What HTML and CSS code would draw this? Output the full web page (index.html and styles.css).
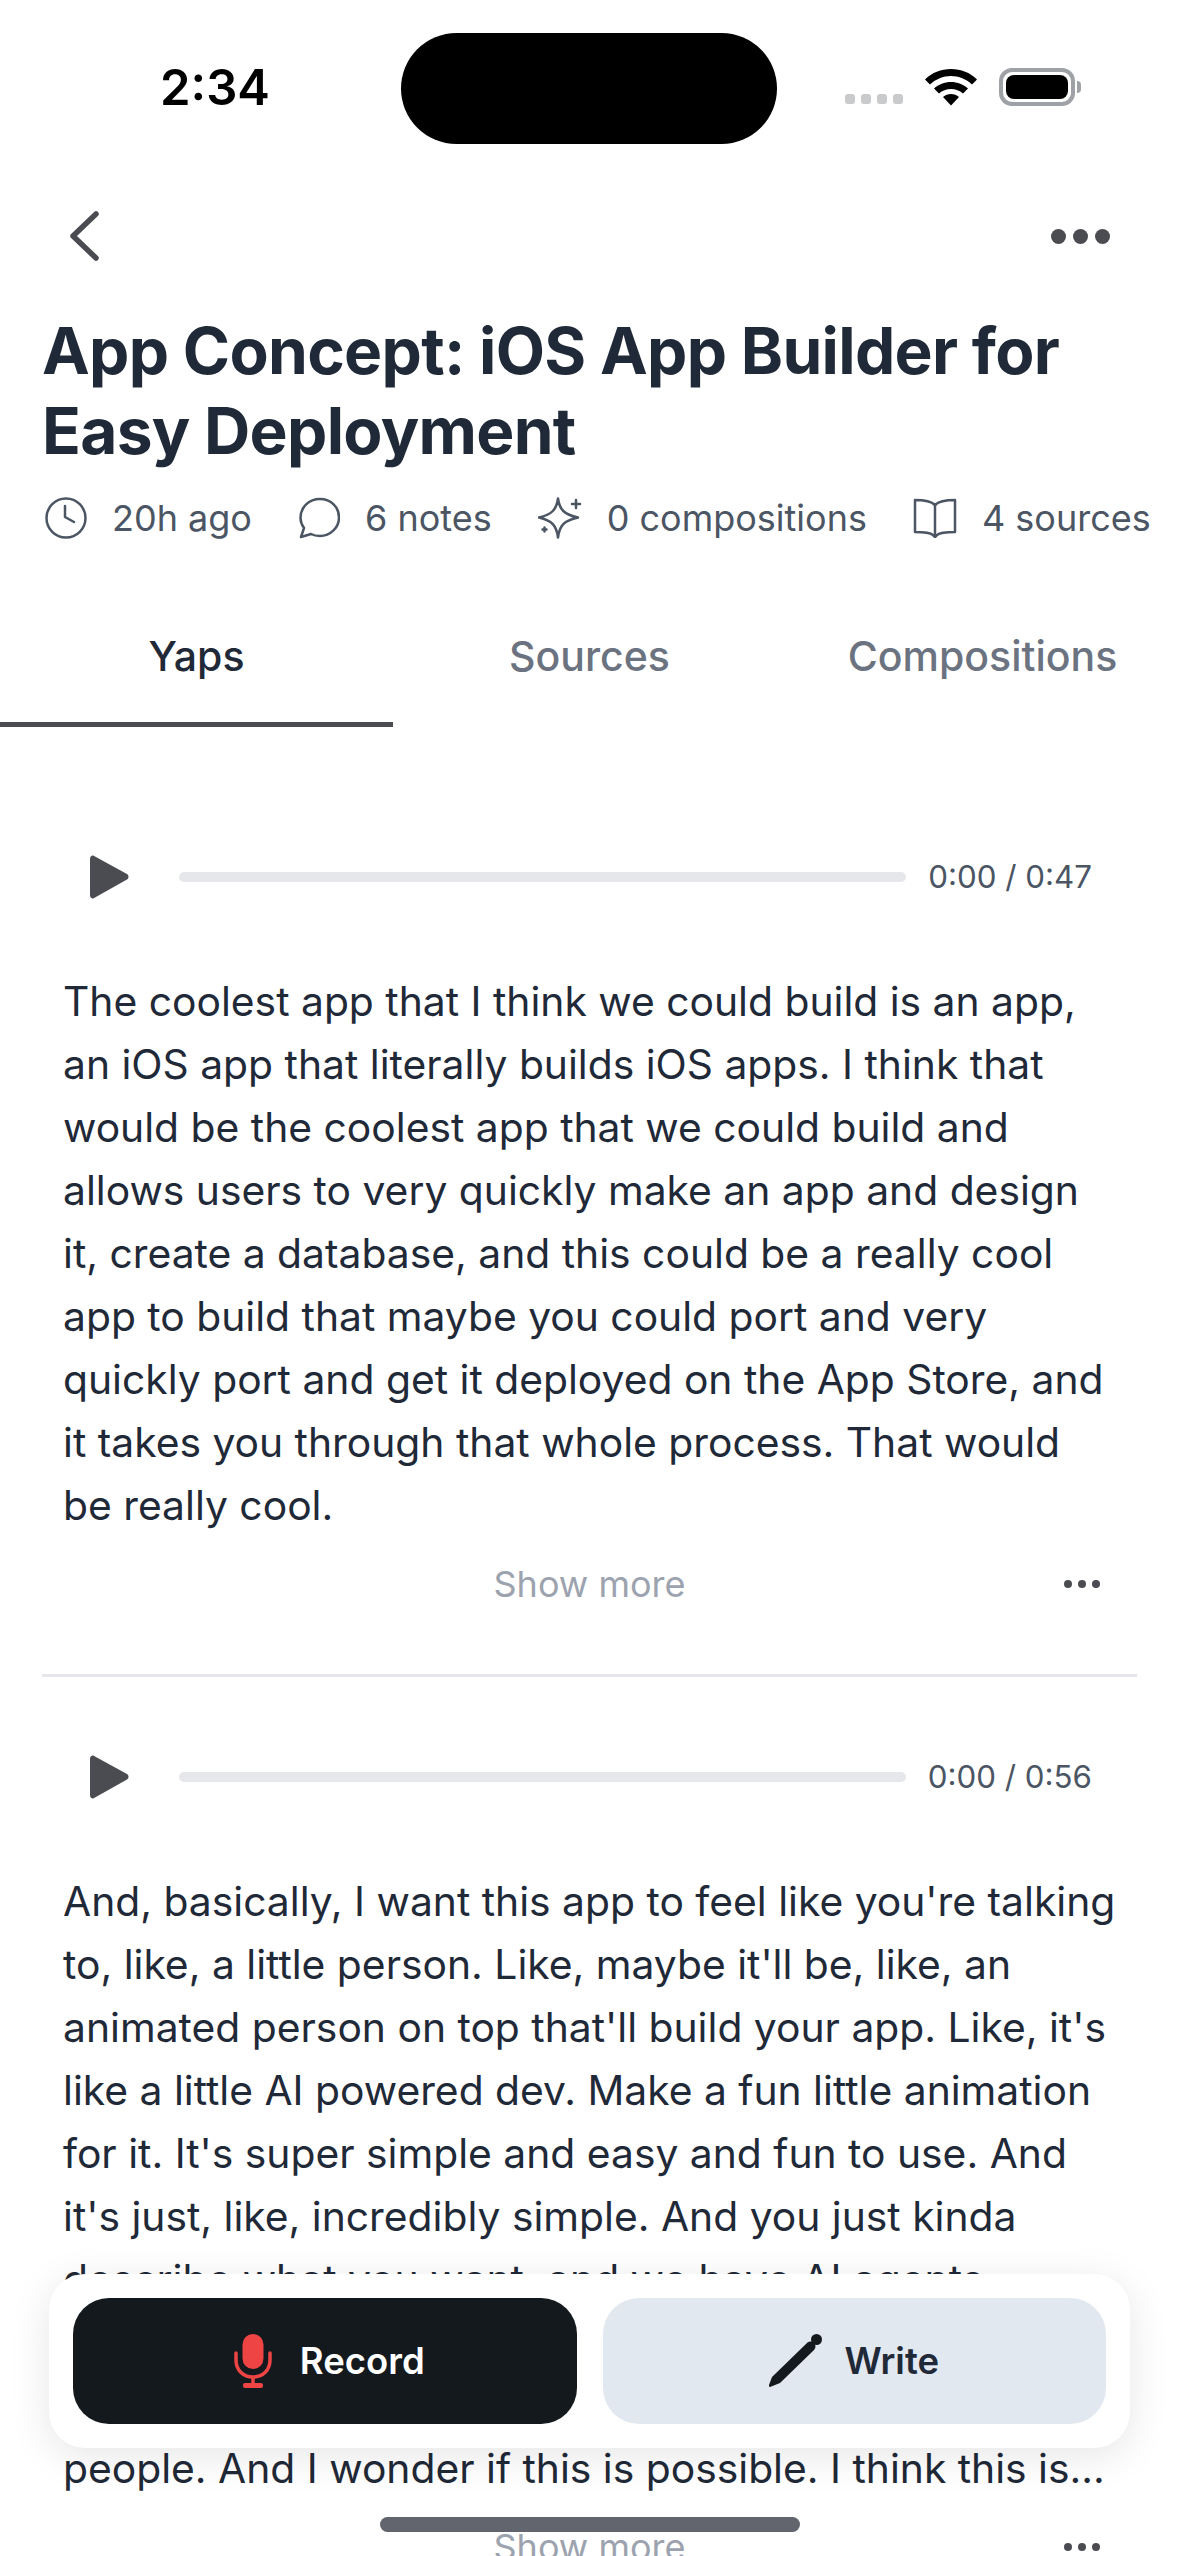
FILE: index.html
```html
<!DOCTYPE html>
<html>
<head>
    <meta charset="UTF-8">
    <title>App Concept</title>
    <link rel="stylesheet" href="styles.css">
</head>
<body>
<div class="screen">
    <!-- Status bar -->
    <div class="status-bar">
        <span class="status-time">2:34</span>
        <div class="island"></div>
        <div class="status-icons">
            <div class="signal"><i></i><i></i><i></i><i></i></div>
            <svg class="wifi" width="52" height="38" viewBox="0 0 52 38">
                <path d="M0 11.500C7 4.500 16 1 26 1s19 3.500 26 10.500l-5 5C41 11 34 8 26 8S11 11 5 16.500z"/>
                <path d="M9 20.500C13.500 16.500 19.500 14 26 14s12.500 2.500 17 6.500l-5 5c-3.200-3-7.500-4.500-12-4.500s-8.800 1.500-12 4.500z"/>
                <path d="M18 29c2.200-2 5-3 8-3s5.800 1 8 3l-8 8.500z"/>
            </svg>
            <div class="battery"><div class="battery-fill"></div></div>
            <div class="battery-cap"></div>
        </div>
    </div>

    <!-- Top nav -->
    <div class="nav-row">
        <svg width="36" height="50" viewBox="0 0 36 50">
            <path d="M30 3L7 25l23 22" fill="none" stroke="#4b4c52" stroke-width="5.500" stroke-linecap="round" stroke-linejoin="round"/>
        </svg>
        <div class="dots dots-large"><i></i><i></i><i></i></div>
    </div>

    <h1 class="title">App Concept: iOS App Builder for Easy Deployment</h1>

    <div class="meta-row">
        <div class="meta-item">
            <svg width="42" height="42" viewBox="0 0 42 42" class="meta-icon">
                <circle cx="21" cy="21" r="19.500"/>
                <path d="M20 9v11l9 5"/>
            </svg>
            <span>20h ago</span>
        </div>
        <div class="meta-item">
            <svg width="42" height="42" viewBox="0 0 42 42" class="meta-icon">
                <path d="M3 40l3-9C3.500 27.500 2.500 24.500 2.500 21 2.500 10 11 2 22 2s19 8 19 18.500S32 39 22 39c-4 0-6.500-.7-9-2z"/>
            </svg>
            <span>6 notes</span>
        </div>
        <div class="meta-item">
            <svg width="44" height="42" viewBox="0 0 44 42" class="meta-icon">
                <path d="M20 1.500c1.500 11 6 16 20 19-14 3-18.500 8-20 20-1.500-12-6-17-19-20 13-3 17.500-8 19-19z"/>
                <path d="M38 3v8M34 7h8M6.500 30.500v4M4.500 32.500h4"/>
            </svg>
            <span>0 compositions</span>
        </div>
        <div class="meta-item">
            <svg width="44" height="40" viewBox="0 0 44 40" class="meta-icon">
                <path d="M22 7C18 3 10 2 2 2v32c8 0 15 .5 18 3l2 2 2-2c3-2.500 10-3 18-3V2c-8 0-16 1-20 5z"/>
                <path d="M22 7v31"/>
            </svg>
            <span>4 sources</span>
        </div>
    </div>

    <div class="tabs">
        <div class="tab tab-active">Yaps</div>
        <div class="tab">Sources</div>
        <div class="tab">Compositions</div>
    </div>

    <div class="yap yap-first">
        <div class="player">
            <svg class="play" width="39" height="44" viewBox="0 0 39 44">
                <path d="M0 4C0 .5 3-.5 5 1.500L37 19c2 1.500 2 4 0 5.500L5 42.500C3 44.500 0 43.500 0 40z" fill="#4b4c52"/>
            </svg>
            <div class="track"></div>
            <span class="time">0:00 / 0:47</span>
        </div>
        <p class="yap-text">The coolest app that I think we could build is an app, an iOS app that literally builds iOS apps. I think that would be the coolest app that we could build and allows users to very quickly make an app and design it, create a database, and this could be a really cool app to build that maybe you could port and very quickly port and get it deployed on the App Store, and it takes you through that whole process. That would be really cool.</p>
        <div class="yap-foot">
            <span class="show-more">Show more</span>
            <div class="dots dots-small"><i></i><i></i><i></i></div>
        </div>
    </div>

    <div class="yap yap-second">
        <div class="player">
            <svg class="play" width="39" height="44" viewBox="0 0 39 44">
                <path d="M0 4C0 .5 3-.5 5 1.500L37 19c2 1.500 2 4 0 5.500L5 42.500C3 44.500 0 43.500 0 40z" fill="#4b4c52"/>
            </svg>
            <div class="track"></div>
            <span class="time">0:00 / 0:56</span>
        </div>
        <p class="yap-text">And, basically, I want this app to feel like you're talking to, like, a little person. Like, maybe it'll be, like, an animated person on top that'll build your app. Like, it's like a little AI powered dev. Make a fun little animation for it. It's super simple and easy and fun to use. And it's just, like, incredibly simple. And you just kinda describe what you want, and we have AI agents<br>working behind the scenes<br>for a lot of different<br>people. And I wonder if this is possible. I think this is...</p>
        <div class="yap-foot">
            <span class="show-more">Show more</span>
            <div class="dots dots-small"><i></i><i></i><i></i></div>
        </div>
    </div>

    <!-- Floating action bar -->
    <div class="action-bar">
        <div class="action-btn btn-record">
            <svg width="38" height="54" viewBox="0 0 38 54">
                <rect x="8.500" y="0" width="21" height="35" rx="10.500" fill="#ef4444"/>
                <path d="M2 19v7c0 10 7 17 17 17s17-7 17-17v-7" fill="none" stroke="#ef4444" stroke-width="3.500" stroke-linecap="round"/>
                <path d="M19 43v8" fill="none" stroke="#ef4444" stroke-width="3.500"/>
                <rect x="9" y="49" width="20" height="5" rx="2" fill="#ef4444"/>
            </svg>
            <span>Record</span>
        </div>
        <div class="action-btn btn-write">
            <svg width="54" height="54" viewBox="0 0 54 54">
                <path d="M1 53c-1 0-1-1-1-2l3-8L38 9c2-2 5-2 7 0s2 5 0 7L11 49z" fill="#13191d"/>
                <circle cx="47.500" cy="5.500" r="5.500" fill="#13191d"/>
            </svg>
            <span>Write</span>
        </div>
    </div>

    <div class="home-bar"></div>
</div>
</body>
</html>
```

FILE: styles.css
```css
html, body {
    margin: 0;
    padding: 0;
    background-color: #fff;
}
.screen {
    position: relative;
    width: 1179px;
    height: 2556px;
    overflow: hidden;
    font-family: Inter, "Liberation Sans", sans-serif;
    color: #1f2937;
}

/* Status bar */
.status-bar {
    height: 198px;
    position: relative;
}
.status-time {
    position: absolute;
    left: 160px;
    top: 60px;
    font-size: 49px;
    font-weight: 600;
    line-height: 56px;
    color: #000;
}
.island {
    position: absolute;
    left: 401px;
    top: 33px;
    width: 376px;
    height: 111px;
    background-color: #000;
    border-radius: 56px;
}
.status-icons {
    position: absolute;
    left: 845px;
    top: 68px;
    display: flex;
    align-items: flex-end;
}
.signal {
    display: flex;
    gap: 6px;
    margin-bottom: 2px;
}
.signal i {
    width: 10px;
    height: 10px;
    border-radius: 3px;
    background-color: #c9cacc;
}
.wifi {
    margin-left: 22px;
    margin-right: 22px;
}
.battery {
    width: 76px;
    height: 38px;
    border: 4px solid #9ea1a6;
    border-radius: 13px;
    box-sizing: border-box;
    padding: 3px;
}
.battery-fill {
    height: 100%;
    background-color: #000;
    border-radius: 8px;
}
.battery-cap {
    width: 4px;
    height: 12px;
    margin: 0 0 13px 2px;
    background-color: #9ea1a6;
    border-radius: 0 4px 4px 0;
}

/* Top */
.nav-row {
    display: flex;
    justify-content: space-between;
    align-items: center;
    height: 76px;
    padding: 0 69px 0 66px;
}
.dots {
    display: flex;
}
.dots i {
    border-radius: 50%;
    background-color: #4b4c52;
}
.dots-large {
    gap: 7px;
}
.dots-large i {
    width: 15px;
    height: 15px;
}
.dots-small {
    gap: 6px;
}
.dots-small i {
    width: 8px;
    height: 8px;
}
.title {
    margin: 37px 42px 0;
    font-size: 64px;
    line-height: 80px;
    font-weight: 700;
    letter-spacing: -0.7px;
    color: #1f2937;
}
.meta-row {
    display: flex;
    align-items: center;
    margin: 24px 0 0 45px;
    height: 46px;
    white-space: nowrap;
    font-size: 36px;
    color: #4b5563;
}
.meta-item {
    display: flex;
    align-items: center;
    gap: 25px;
    margin-right: 46px;
}
.meta-icon {
    flex: none;
    fill: none;
    stroke: #4b5563;
    stroke-width: 2.500;
    stroke-linejoin: round;
    stroke-linecap: round;
}

/* Tabs */
.tabs {
    display: flex;
    margin-top: 67px;
    height: 119px;
}
.tab {
    flex: 1;
    text-align: center;
    font-size: 41px;
    font-weight: 500;
    line-height: 96px;
    color: #6b7280;
    box-sizing: border-box;
}
.tab-active {
    color: #1f2937;
    border-bottom: 5px solid #4b4c52;
}

/* Yaps */
.yap {
    margin: 0 42px;
}
.yap-first {
    padding-top: 128px;
    padding-bottom: 59px;
    border-bottom: 3px solid #e5e7eb;
}
.yap-second {
    padding-top: 78px;
}
.player {
    display: flex;
    align-items: center;
    height: 44px;
    padding: 0 45px 0 48px;
}
.play {
    flex: none;
}
.track {
    flex: 1;
    height: 10px;
    margin: 0 22px 0 50px;
    background-color: #e5e7eb;
    border-radius: 5px;
}
.time {
    font-size: 31.300px;
    color: #4b5563;
}
.yap-text {
    margin: 71px 20px 0 21px;
    font-size: 40.800px;
    line-height: 63px;
    color: #1f2937;
}
.yap-foot {
    position: relative;
    text-align: center;
    margin-top: 23px;
    line-height: 48px;
}
.show-more {
    font-size: 36px;
    color: #9ca3af;
}
.yap-foot .dots {
    position: absolute;
    right: 37px;
    top: 20px;
}

/* Floating bar */
.action-bar {
    position: absolute;
    left: 49px;
    top: 2274px;
    width: 1081px;
    height: 174px;
    box-sizing: border-box;
    padding: 24px;
    display: flex;
    gap: 26px;
    background-color: #fff;
    border-radius: 36px;
    box-shadow: 0 8px 40px rgba(0, 0, 0, 0.1);
}
.action-btn {
    flex: 1;
    display: flex;
    align-items: center;
    justify-content: center;
    border-radius: 36px;
    font-size: 36.500px;
    font-weight: 600;
}
.btn-record {
    gap: 28px;
    background-color: #13191d;
    color: #fff;
}
.btn-record svg {
    margin-left: 9px;
}
.btn-write {
    gap: 21px;
    background-color: #e2e8f0;
    color: #1f2937;
}
.home-bar {
    position: absolute;
    left: 380px;
    top: 2517px;
    width: 420px;
    height: 15px;
    background-color: #63656e;
    border-radius: 8px;
}
```
